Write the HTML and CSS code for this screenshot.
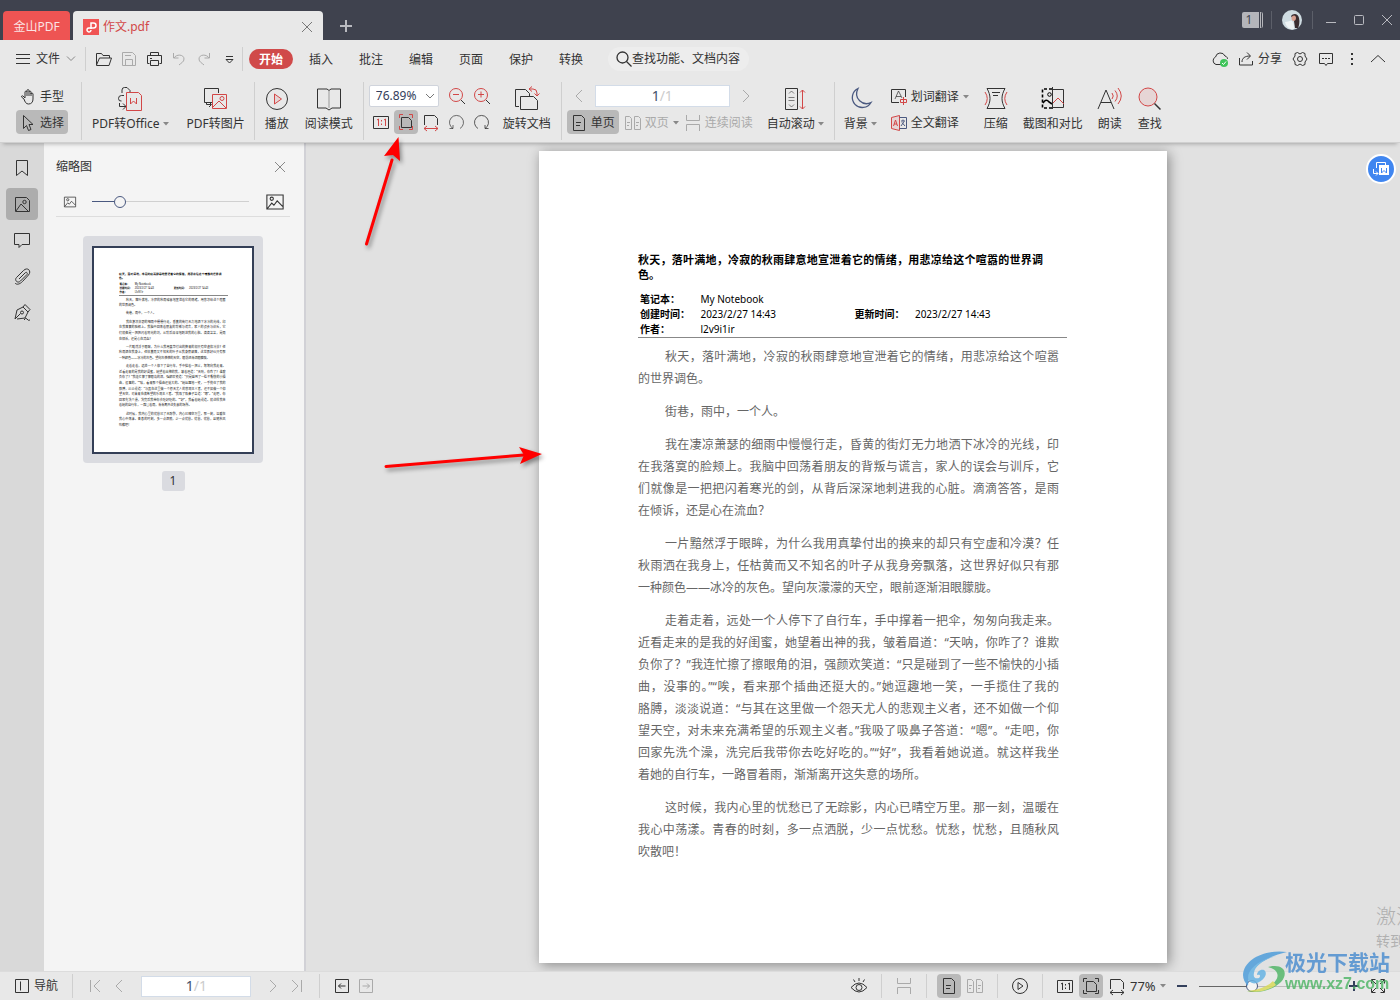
FILE: index.html
```html
<!DOCTYPE html>
<html lang="zh-CN">
<head>
<meta charset="utf-8">
<title>作文.pdf - 金山PDF</title>
<link rel="stylesheet" href="styles.css">
</head>
<body>
<svg class="defs" aria-hidden="true">
  <symbol id="caret" viewBox="0 0 6 4"><path d="M0 0h6L3 3.500z" fill="#888" stroke="none"/></symbol>
  <symbol id="left" viewBox="0 0 24 24"><path d="M15 6l-6 6 6 6"/></symbol>
  <symbol id="right" viewBox="0 0 24 24"><path d="M9 6l6 6-6 6"/></symbol>
  <symbol id="first" viewBox="0 0 24 24"><path d="M7.500 6v12M17 6l-6 6 6 6"/></symbol>
  <symbol id="last" viewBox="0 0 24 24"><path d="M16.500 6v12M7 6l6 6-6 6"/></symbol>
  <symbol id="down" viewBox="0 0 10 8"><path d="M1 1.500l4 4 4-4"/></symbol>
  <symbol id="single" viewBox="0 0 16 16"><path d="M2.500.5h8l3 3v12h-11zM5 7.500h5M5 10.500h4"/></symbol>
  <symbol id="double" viewBox="0 0 16 16"><path d="M.5 1.500h4l2 2v11h-6zM9.500 1.500h4l2 2v11h-6zM2 7.500h3M2 10.500h2M11 7.500h3M11 10.500h2"/></symbol>
  <symbol id="continuous" viewBox="0 0 16 16"><path d="M1.500 0v5.500h13V0M1.500 16v-6.500h13V16"/></symbol>
  <symbol id="picture" viewBox="0 0 24 24"><path d="M4.500 5.500h15v13h-15zM5 18l4-5 2 2 3-4 5 5"/><circle cx="9" cy="9" r="1.500"/></symbol>
</svg>

<header class="titlebar">
  <button class="home-tab">金山PDF</button>
  <div class="doc-tab">
    <svg width="16" height="16" viewBox="0 0 16 16"><path d="M0 0h16v16H0z" fill="#f05454"/><path d="M8 10V4h2.500a2.500 2.500 0 0 1 0 5H6.500a2 2 0 1 0 1.500 2" stroke="#fff" stroke-width="1.500"/></svg>
    <span>作文.pdf</span>
    <button class="tab-close" aria-label="关闭标签"><svg width="12" height="12" viewBox="0 0 12 12"><path d="M1 1l10 10M11 1L1 11"/></svg></button>
  </div>
  <button class="new-tab" aria-label="新建标签"><svg width="14" height="14" viewBox="0 0 14 14"><path d="M7 1v12M1 7h12" stroke-width="2"/></svg></button>
  <div class="window-controls">
    <button class="win-count">1</button>
    <i class="title-sep"></i>
    <svg class="avatar" width="20" height="20" viewBox="0 0 20 20"><circle cx="10" cy="10" r="10" fill="#cfdce2" stroke="none"/><path d="M9 6c2-3 7-3 8 2 1 4 0 8-1 10l-3 0-1-7z" fill="#3a2d30" stroke="none"/><path d="M10 6.500c2-2 4-1 4 1.500 0 2-1.500 3.500-3 3S9 8 10 6.500z" fill="#d8a090" stroke="none"/><path d="M3 12c3 0 5-2 7-1 2 2 2 5 2 8-4 1-8-2-9-7z" fill="#eef3f5" stroke="none"/></svg>
    <i class="title-sep"></i>
    <button aria-label="最小化"><svg width="12" height="12" viewBox="0 0 12 12"><path d="M1 8.500h10"/></svg></button>
    <button aria-label="最大化"><svg width="12" height="12" viewBox="0 0 12 12"><rect x="1.500" y="1.500" width="9" height="9" rx="1"/></svg></button>
    <button aria-label="关闭"><svg width="12" height="12" viewBox="0 0 12 12"><path d="M1 1l10 10M11 1L1 11"/></svg></button>
  </div>
</header>

<nav class="menubar">
  <button class="file-menu"><svg width="14" height="12" viewBox="0 0 14 12"><path d="M0 1.500h14M0 5.500h14M0 10.500h14"/></svg><span>文件</span><svg class="muted" width="10" height="8"><use href="#down"/></svg></button>
  <i class="sep short"></i>
  <div class="quick">
    <button class="icon" aria-label="打开"><svg viewBox="0 0 24 24"><path d="M4.500 18V6.500h5l1.500 2h6.500V11M4.500 18l3-7h12l-2.500 7.500H4.500z"/></svg></button>
    <button class="icon off" aria-label="保存"><svg viewBox="0 0 24 24"><path d="M5.500 5.500h10l3 3v10h-13zM8.500 18v-5.500h7V18M8 8.500h6"/></svg></button>
    <button class="icon" aria-label="打印"><svg viewBox="0 0 24 24"><path d="M8.500 9V5.500h8V9M7.500 16.500h-2v-8h14v8h-2M8.500 13.500h8v5h-8zM8 11.500h2" stroke-linejoin="round"/></svg></button>
    <button class="icon off" aria-label="撤销"><svg viewBox="0 0 24 24"><path d="M6.500 6v5h5M7 11c2-4 10-4 10 1 0 3-3 4-5 6"/></svg></button>
    <button class="icon off" aria-label="恢复"><svg viewBox="0 0 24 24"><path d="M17.500 6v5h-5M17 11c-2-4-10-4-10 1 0 3 3 4 5 6"/></svg></button>
    <button class="icon" aria-label="自定义"><svg viewBox="0 0 24 24"><path d="M9 9.500h7M9 12.500h7l-3.500 3.500z"/></svg></button>
  </div>
  <i class="sep short"></i>
  <div class="tabs">
    <button class="active">开始</button><button>插入</button><button>批注</button><button>编辑</button><button>页面</button><button>保护</button><button>转换</button>
  </div>
  <label class="search"><svg width="16" height="16" viewBox="0 0 16 16"><circle cx="6.500" cy="6.500" r="5.500" stroke-width="1.300"/><path d="M10.500 10.500l5 5" stroke-width="1.300"/></svg><input aria-label="搜索" placeholder="查找功能、文档内容"></label>
  <div class="menu-right">
    <button class="icon" aria-label="云同步"><svg viewBox="0 0 24 24"><path d="M13 17.500H8a4 4 0 0 1-.5-7.500 5 5 0 0 1 9.500-1c2 .5 2.500 2 2.500 3" /><circle cx="16" cy="16" r="4" fill="#3fc45a" stroke="none"/><path d="M14 16l1.500 1.500 2.500-3" stroke="#fff"/></svg></button>
    <button class="share"><svg width="16" height="16" viewBox="0 0 16 16"><path d="M1.500 7v7h13v-4M4 11c0-4 3-6 8-6M9 1.500L12.500 5 9 8.500"/></svg>分享</button>
    <button class="icon" aria-label="设置"><svg viewBox="0 0 24 24"><path d="M9.500 5.500L12 7l2.500-1.500 2.500 1V9l2 3-2 3v2.500l-2.500 1L12 17l-2.500 1.500-2.500-1V15l-2-3 2-3V6.500z" stroke-linejoin="round"/><circle cx="12" cy="12" r="2.500"/></svg></button>
    <button class="icon" aria-label="反馈"><svg viewBox="0 0 24 24"><path d="M5.500 6.500h13v10h-5l-1.500 2-1.500-2h-5zM8 11.500h2M11 11.500h2M14 11.500h2"/></svg></button>
    <button class="icon" aria-label="更多"><svg viewBox="0 0 24 24"><path d="M12 6v2M12 11v2M12 16v2" stroke-width="2"/></svg></button>
    <button class="icon" aria-label="收起功能区"><svg viewBox="0 0 24 24"><path d="M5 15l7-6.500 7 6.500"/></svg></button>
  </div>
</nav>

<section class="ribbon" aria-label="工具">
  <div class="group modes">
    <button class="row-tool"><svg width="16" height="16" viewBox="0 0 16 16"><path d="M4 10L1.500 8c-.5-1 1-1.500 1.500-1l2 2V3c0-1.200 2-1.200 2 0V1.500c0-1.200 2-1.200 2 0V3c0-1.200 2-1.200 2 0v2c0-1.200 2-1.200 2 0v5c0 3-1.500 5-4.500 5-2.500 0-3.500-2-4.500-5zM7 3v4M9 3v4M11 4v3"/></svg>手型</button>
    <button class="row-tool on"><svg width="16" height="16" viewBox="0 0 16 16"><path d="M3.500.5v13l3-3 2 5 2.500-1-2-5h4z"/></svg>选择</button>
  </div>
  <i class="sep"></i>
  <div class="group convert">
    <button class="tool"><svg viewBox="0 0 26 26"><path d="M5 7V4q0-2.500 2.500-2.500H10l3 3V7M7 9.500H4.500q-3 0-3 3T4.500 15M2.500 17v3.500H9M6 17.500l3 3-3 3" /><path class="red" d="M9.500 6.500h12l3 3v15h-15zM13.500 12v6l3-3 3 3v-6"/></svg><span>PDF转Office<svg class="caret"><use href="#caret"/></svg></span></button>
    <button class="tool"><svg viewBox="0 0 26 26"><path d="M9 16.500H1.500v-14h14V7M3.500 16v2.500H8M6 16l2.500 2.500L6 21"/><path class="red" d="M9.500 8.500h14v14h-14zM10 21l6-6 7 7"/><circle class="red" cx="19" cy="12.500" r="2"/></svg><span>PDF转图片</span></button>
  </div>
  <i class="sep"></i>
  <div class="group reading">
    <button class="tool"><svg viewBox="0 0 26 26"><circle cx="13" cy="13" r="10.500"/><path class="red pink" d="M10.500 8l7 5-7 5z"/></svg><span>播放</span></button>
    <button class="tool"><svg viewBox="0 0 26 26"><path d="M13 4.500l-2-1.500H1.500v19H10l3 2 3-2h8.500V3H15z"/><path d="M13 4.500V22" stroke="#999"/></svg><span>阅读模式</span></button>
  </div>
  <i class="sep"></i>
  <div class="group zoom-group">
    <div class="stack">
      <div class="zoom-row"><select aria-label="缩放比例"><option>76.89%</option></select>
        <button class="icon" aria-label="缩小"><svg viewBox="0 0 24 24"><circle class="red" cx="11" cy="11" r="6.500"/><path class="red" d="M8 10.500h6"/><path d="M16 16l4 4"/></svg></button>
        <button class="icon" aria-label="放大"><svg viewBox="0 0 24 24"><circle class="red" cx="11" cy="11" r="6.500"/><path class="red" d="M8 10.500h6M11 7.500v6"/><path d="M16 16l4 4"/></svg></button></div>
      <div class="fit-row">
        <button class="icon" aria-label="实际大小"><svg viewBox="0 0 24 24"><path d="M4.500 6.500h15v12h-15z"/><path class="red" d="M8 10l1.500-1v7M15 10l1.500-1v7M12.500 10v1.500M12.500 13.500v1.500"/></svg></button>
        <button class="icon on" aria-label="适合页面"><svg viewBox="0 0 24 24"><path d="M7.500 7.500h7l3 3v7h-10z"/><path class="red" d="M5.500 8V4.500H9M15 4.500h3.500V8M18.500 16v3.500H15M9 19.500H5.500V16"/></svg></button>
        <button class="icon" aria-label="适合宽度"><svg viewBox="0 0 24 24"><path d="M5.500 15V5.500h10l3 3V15"/><path class="red" d="M5 18.500h14M8 16l-3 2.500L8 21M16 16l3 2.500-3 2.500"/></svg></button>
        <button class="icon" aria-label="向左旋转"><svg viewBox="0 0 24 24"><path d="M9 18.500a7 7 0 1 1 7 0M5.500 18.500H9V15" opacity=".7"/></svg></button>
        <button class="icon" aria-label="向右旋转"><svg viewBox="0 0 24 24"><path d="M9 18.500a7 7 0 1 1 7 0M19.500 18.500H16V15" opacity=".8"/></svg></button></div>
    </div>
    <button class="tool"><svg viewBox="0 0 26 26"><path d="M5 20.500H1.500v-17h10l4 4V10"/><path d="M6.500 10.500h13l4 4v9h-17z" stroke-linejoin="round"/><path class="red" d="M15 3h4q4 0 4 4v3M18 .5L15 3l3 2.500M20.500 7.500L23 10l2.500-2.500"/></svg><span>旋转文档</span></button>
  </div>
  <i class="sep"></i>
  <div class="group page-group">
    <div class="stack">
      <div class="page-row"><button class="icon off" aria-label="上一页"><svg><use href="#left"/></svg></button>
        <label class="pager"><input aria-label="页码" value="1"><span>/1</span></label>
        <button class="icon off" aria-label="下一页"><svg><use href="#right"/></svg></button></div>
      <div class="view-row">
        <button class="row-tool on"><svg width="16" height="16"><use href="#single"/></svg>单页</button>
        <button class="row-tool plain off"><svg width="16" height="16"><use href="#double"/></svg>双页<svg class="caret"><use href="#caret"/></svg></button>
        <button class="row-tool plain off"><svg width="16" height="16"><use href="#continuous"/></svg>连续阅读</button></div>
    </div>
    <button class="tool"><svg viewBox="0 0 26 26"><path d="M3.500 2.500h12v21h-12z"/><path d="M7 7.500L9.500 5 12 7.500M6.500 11.500h6M6.500 14.500h6M7 18.500L9.500 21l2.500-2.500" opacity=".6"/><path class="red" d="M20.500 4v19M18 6.500L20.500 4 23 6.500M18 20.500l2.500 2.500 2.500-2.500"/></svg><span>自动滚动<svg class="caret"><use href="#caret"/></svg></span></button>
  </div>
  <i class="sep"></i>
  <div class="group extras">
    <button class="tool"><svg viewBox="0 0 26 26"><path d="M11 2.500a10 10 0 1 0 13 14c-8 4-18-4-13-14z" stroke="#4a5980" stroke-width="1.300"/></svg><span>背景<svg class="caret"><use href="#caret"/></svg></span></button>
    <div class="stack">
      <button class="row-tool plain"><svg width="16" height="16" viewBox="0 0 16 16"><path d="M8 13.500H.5V.5h14V8"/><path d="M4 10l3.500-8L11 9M5 7.500h5" opacity=".7"/><path class="red" d="M9.500 10.500h6v3h-6zM12.500 8v8"/></svg>划词翻译<svg class="caret"><use href="#caret"/></svg></button>
      <button class="row-tool plain"><svg width="16" height="16" viewBox="0 0 16 16"><path class="red pink" d="M.5 2.500l8-2v15l-8-2zM2.500 11l2-6 2 6M3 9h3"/><path d="M8.500 2.500h7v11h-7M10 6h4M12 4.500V6M10 11l3-4.500M11 7.500l3 3.500" stroke="#4a5980"/></svg>全文翻译</button>
    </div>
    <button class="tool"><svg viewBox="0 0 26 26"><path d="M4 2.500h18c-4 7-4 13 0 20H4c4-7 4-13 0-20zM9 6.500h8M10 9.500h5"/><path class="red" d="M2 6q4.500 6.500 0 13M24 6q-4.500 6.500 0 13"/></svg><span>压缩</span></button>
    <button class="tool"><svg viewBox="0 0 26 26"><path d="M12 3H2.500v19H12" stroke="#000" stroke-width="1.600" stroke-dasharray="3 2"/><path d="M3 17q3-5 6-1l3 2" stroke="#000" stroke-width="1.600"/><circle cx="9.500" cy="8.500" r="1.800" stroke="#000"/><path d="M12.500 1v22M12.500 3.500h11v18h-11"/><path class="red" d="M13 17l5-5 6 6"/></svg><span>截图和对比</span></button>
    <button class="tool"><svg viewBox="0 0 26 26"><path d="M1 23L9 4l8 19M4 16.500h10"/><path class="red" d="M15 7q2.500 3 0 6M18 4.500q4.500 5.500 0 11M21 2q6.500 8 0 16"/></svg><span>朗读</span></button>
    <button class="tool"><svg viewBox="0 0 26 26"><circle class="red pink" cx="11" cy="11" r="9"/><path d="M17.500 17.500l6 6" stroke-width="1.500"/></svg><span>查找</span></button>
  </div>
</section>

<main class="workspace">
  <aside class="rail">
    <button aria-label="书签"><svg viewBox="0 0 24 24"><path d="M6.500 4.500h11v15L12 15l-5.500 4.500z"/></svg></button>
    <button class="on" aria-label="缩略图"><svg viewBox="0 0 24 24"><path d="M5.500 5.500h11l3 3v11h-14zM6 19l5-7 7 7"/><circle cx="14.500" cy="10" r="1.700"/></svg></button>
    <button aria-label="批注"><svg viewBox="0 0 24 24"><path d="M4.500 5.500h15v11H12l-3 3v-3H4.500z"/></svg></button>
    <button aria-label="附件"><svg viewBox="0 0 24 24"><path d="M9 15l6-6c1.500-1.500 3 0 2 1.500l-6.500 6.500c-3 3-6.500-1-4-3.500l7-7c4-4 8.500.5 5 4.500l-6 6.500c-3 3-6 3.500-7.500 1.500"/></svg></button>
    <button aria-label="签名"><svg viewBox="0 0 24 24"><path d="M5 19l2-9 6-3 5 5-3 6-8 1M5 19l5.500-5.500M13 7l2-2.500 5 5-2 2.500M14 20q2-3 3-1t3 1"/><circle cx="12" cy="12.500" r="1.500"/></svg></button>
  </aside>
  <section class="thumbs">
    <div class="thumbs-head"><h2>缩略图</h2><button aria-label="关闭缩略图"><svg width="12" height="12" viewBox="0 0 12 12"><path d="M1 1l10 10M11 1L1 11"/></svg></button></div>
    <div class="thumb-size"><svg width="18" height="18"><use href="#picture"/></svg><input type="range" aria-label="缩略图大小" min="0" max="100" value="15"><svg width="26" height="26"><use href="#picture"/></svg></div>
    <button class="thumb" aria-label="第 1 页"><span class="thumb-frame" id="thumb"></span></button>
    <span class="thumb-no">1</span>
  </section>
  <section class="canvas">
    <article class="page" id="page">
      <h1><span class="ln">秋天，落叶满地，冷寂的秋雨肆意地宣泄着它的情绪，用悲凉给这个喧嚣的世界调</span>色。</h1>
      <table>
        <tr><th>笔记本：</th><td>My Notebook</td><th></th><td></td></tr>
        <tr><th>创建时间：</th><td>2023/2/27 14:43</td><th>更新时间：</th><td>2023/2/27 14:43</td></tr>
        <tr><th>作者：</th><td>l2v9i1ir</td><th></th><td></td></tr>
      </table>
      <p><span class="ln in">秋天，落叶满地，冷寂的秋雨肆意地宣泄着它的情绪，用悲凉给这个喧嚣</span>的世界调色。</p>
      <p><span class="in">街巷，雨中，一个人。</span></p>
      <p><span class="ln in">我在凄凉萧瑟的细雨中慢慢行走，昏黄的街灯无力地洒下冰冷的光线，印</span><span class="ln">在我落寞的脸颊上。我脑中回荡着朋友的背叛与谎言，家人的误会与训斥，它</span><span class="ln">们就像是一把把闪着寒光的剑，从背后深深地刺进我的心脏。滴滴答答，是雨</span>在倾诉，还是心在流血？</p>
      <p><span class="ln in">一片黯然浮于眼眸，为什么我用真挚付出的换来的却只有空虚和冷漠？任</span><span class="ln">秋雨洒在我身上，任枯黄而又不知名的叶子从我身旁飘落，这世界好似只有那</span>一种颜色——冰冷的灰色。望向灰濛濛的天空，眼前逐渐泪眼朦胧。</p>
      <p><span class="ln in">走着走着，远处一个人停下了自行车，手中撑着一把伞，匆匆向我走来。</span><span class="ln">近看走来的是我的好闺蜜，她望着出神的我，皱着眉道：“天呐，你咋了？谁欺</span><span class="ln">负你了？”我连忙擦了擦眼角的泪，强颜欢笑道：“只是碰到了一些不愉快的小插</span><span class="ln">曲，没事的。”“唉，看来那个插曲还挺大的。”她逗趣地一笑，一手揽住了我的</span><span class="ln">胳膊，淡淡说道：“与其在这里做一个怨天尤人的悲观主义者，还不如做一个仰</span><span class="ln">望天空，对未来充满希望的乐观主义者。”我吸了吸鼻子答道：“嗯”。“走吧，你</span><span class="ln">回家先洗个澡，洗完后我带你去吃好吃的。”“好”，我看着她说道。就这样我坐</span>着她的自行车，一路冒着雨，渐渐离开这失意的场所。</p>
      <p><span class="ln in">这时候，我内心里的忧愁已了无踪影，内心已晴空万里。那一刻，温暖在</span><span class="ln">我心中荡漾。青春的时刻，多一点洒脱，少一点忧愁。忧愁，忧愁，且随秋风</span>吹散吧！</p>
    </article>
    <button class="float-btn" aria-label="转为Word"><svg width="18" height="18" viewBox="0 0 18 18"><path d="M4.500 8V2.500h9V5M1.500 9v4.500H6M4 11.500l2 2-2 2" stroke="#fff"/><path d="M7 5h10v10H7z" fill="#fff" stroke="none"/><path d="M9.500 8v5l2.500-2.500 2.500 2.500V8" stroke="#4086f0"/></svg></button>
    <div class="activate"><b>激活</b><span>转到</span></div>
  </section>
</main>

<footer class="status">
  <button class="nav-btn"><svg width="16" height="16" viewBox="0 0 16 16"><path d="M1.500 1.500h13v13h-13zM6.500 3.500v9"/></svg>导航</button>
  <i class="sep"></i>
  <button class="icon off" aria-label="首页"><svg><use href="#first"/></svg></button>
  <button class="icon off" aria-label="上一页"><svg><use href="#left"/></svg></button>
  <label class="pager small"><input aria-label="当前页" value="1"><span>/1</span></label>
  <button class="icon off" aria-label="下一页"><svg><use href="#right"/></svg></button>
  <button class="icon off" aria-label="末页"><svg><use href="#last"/></svg></button>
  <i class="sep"></i>
  <button class="icon" aria-label="后退"><svg viewBox="0 0 24 24"><path d="M5.500 5.500h13v13h-13zM8.500 12h7M11 9.500L8.500 12l2.500 2.500"/></svg></button>
  <button class="icon off" aria-label="前进"><svg viewBox="0 0 24 24"><path d="M5.500 5.500h13v13h-13zM8.500 12h7M13 9.500l2.500 2.500-2.500 2.500"/></svg></button>
  <div class="status-right">
    <button class="icon" aria-label="护眼模式"><svg viewBox="0 0 24 24"><path d="M4 13.500q8-9 16 0-8 9-16 0zM12 4v3M6.500 5.500L8 8M17.500 5.500L16 8"/><circle cx="12" cy="13.500" r="3"/></svg></button>
    <i class="sep"></i>
    <button class="icon off" aria-label="连续阅读"><svg class="s16"><use href="#continuous"/></svg></button>
    <i class="sep"></i>
    <button class="icon on" aria-label="单页"><svg class="s16"><use href="#single"/></svg></button>
    <button class="icon off tight" aria-label="双页"><svg class="s16"><use href="#double"/></svg></button>
    <i class="sep"></i>
    <button class="icon" aria-label="播放"><svg viewBox="0 0 24 24"><circle cx="12" cy="12" r="7.500"/><path d="M10 8.500l5 3.500-5 3.500z"/></svg></button>
    <i class="sep"></i>
    <button class="icon" aria-label="实际大小"><svg viewBox="0 0 24 24"><path d="M4.500 6.500h15v12h-15zM8 10l1.500-1v7M15 10l1.500-1v7M12.500 10v1.500M12.500 13.500v1.500"/></svg></button>
    <button class="icon on tight" aria-label="适合页面"><svg viewBox="0 0 24 24"><path d="M7.500 7.500h7l3 3v7h-10zM4.500 8V4.500H8M16 4.500h3.500V8M19.500 16v3.500H16M8 19.500H4.500V16"/></svg></button>
    <button class="icon tight" aria-label="适合宽度"><svg viewBox="0 0 24 24"><path d="M5.500 15V5.500h10l3 3V15M5 18.500h14M8 16l-3 2.500L8 21M16 16l3 2.500-3 2.500"/></svg></button>
    <button class="percent">77%<svg class="caret"><use href="#caret"/></svg></button>
    <button class="icon" aria-label="缩小"><svg viewBox="0 0 24 24"><path d="M7 12h10" stroke="#34405c" stroke-width="2"/></svg></button>
    <input class="zoom-range" type="range" aria-label="缩放" min="0" max="100" value="37">
    <button class="icon" aria-label="放大"><svg viewBox="0 0 24 24"><path d="M7 12h10M12 7v10" stroke="#34405c" stroke-width="2"/></svg></button>
    <button class="icon" aria-label="全屏"><svg viewBox="0 0 24 24"><path d="M5.500 9.500v-4h4M14.500 5.500h4v4M18.500 14.500v4h-4M9.500 18.500h-4v-4M6 6l4 4M18 6l-4 4M6 18l4-4M18 18l-4-4"/></svg></button>
  </div>
</footer>

<svg class="arrow arrow-up" width="60" height="120" viewBox="0 0 60 120" aria-hidden="true"><path d="M15.500 107L41 23" stroke="#f00" stroke-width="3" stroke-linecap="round"/><path d="M47.500 0l1.500 24-7-6-9 1z" fill="#f00" stroke="none"/></svg>
<svg class="arrow arrow-right" width="170" height="30" viewBox="0 0 170 30" aria-hidden="true"><path d="M6 21.500L144 10" stroke="#f00" stroke-width="3" stroke-linecap="round"/><path d="M162 9l-23-7 5 8-4 9z" fill="#f00" stroke="none"/></svg>
<div class="brand">
  <svg width="46" height="42" viewBox="0 0 46 42" aria-hidden="true"><path d="M45 1C25-2 2 7 1 24c0 4 2 8 5 11 0-16 13-28 39-34z" fill="#4f9edb" stroke="none"/><path d="M34 5C17 9 6 18 6 27c1 5 6 7 11 4 6-3 9-9 5-12-4-1-7 2-7 5 3-1 4 1 2 3-4 1-6-1-5-5 1-7 9-13 22-17z" fill="#67b4e4" stroke="none"/><path d="M26 16c16-4 21 6 13 15-8 8-22 12-34 9 12 0 24-3 29-11 4-6 0-11-8-13z" fill="#55b76b" stroke="none"/><path d="M34 34c-8 6-20 8-29 6 10-1 20-4 26-10z" fill="#d9da5a" stroke="none"/></svg>
  <div><strong>极光下载站</strong><span>www.xz7.com</span></div>
</div>
<script src="thumb.js"></script>
</body>
</html>
```
FILE: thumb.js
```js
// Fill the thumbnail with a small copy of the open page.
const copy = document.getElementById('page').cloneNode(true);
copy.removeAttribute('id');
copy.classList.add('mini');
copy.setAttribute('aria-hidden', 'true');
document.getElementById('thumb').append(copy);
```
FILE: styles.css
```css
* { box-sizing: border-box; }
body {
  margin: 0;
  height: 100vh;
  display: flex;
  flex-direction: column;
  position: relative;
  overflow: hidden;
  background: #e8e8e8;
  color: #333;
  font: 12px/16px "Noto Sans", "Noto Sans CJK SC", sans-serif;
}
button, input, select { font: inherit; color: inherit; }
button { border: 0; padding: 0; background: none; white-space: nowrap; }
svg { fill: none; stroke: currentColor; flex: none; display: block; }
.defs { position: absolute; width: 0; height: 0; }
.red { stroke: #d24747; }
.pink { fill: #e6d5d5; }
.caret { width: 6px; height: 4px; }
.muted { color: #888; }

.icon { width: 24px; height: 24px; border-radius: 4px; display: grid; place-items: center; flex: none; }
.icon svg { width: 24px; height: 24px; }
.icon .s16 { width: 16px; height: 16px; }
.on { background: #b9b9b9; }
.off { color: #aaa; }
.sep { width: 1px; background: #cfcfcf; flex: none; }

/* title bar */
.titlebar { height: 40px; flex: none; display: flex; align-items: flex-end; padding-left: 3px; background: #3f424e; color: #b9bac0; }
.home-tab { width: 67px; height: 29px; padding-top: 2px; border-radius: 4px 4px 0 0; background: #ee5453; color: #fbe3e3; }
.doc-tab { width: 250px; height: 29px; margin-left: 3px; padding: 2px 10px 0; display: flex; align-items: center; gap: 4px; border-radius: 4px 4px 0 0; background: #e8e8e8; color: #d24747; }
.doc-tab > svg { stroke: none; }
.tab-close { margin-left: auto; color: #777; }
.new-tab { margin: 0 0 7px 16px; }
.window-controls { height: 40px; margin-left: auto; padding-right: 7px; display: flex; align-items: center; gap: 16px; }
.win-count { width: 21px; height: 16px; margin-right: -8px; padding-right: 4px; border-right: 3px double #b4b5ba; background: linear-gradient(#b4b5ba, #b4b5ba) 0 0 / 17px 16px no-repeat; border-radius: 2px; color: #3f424e; }
.title-sep { width: 1px; height: 18px; background: #5c5f69; margin-right: -6px; }
.avatar { margin-right: -6px; }
.title-sep + button { margin-left: 2px; }

/* menu row */
.menubar { height: 38px; flex: none; display: flex; align-items: center; padding: 0 10px 0 16px; }
.file-menu { display: flex; align-items: center; gap: 6px; }
.short { height: 24px; margin: 0 6px 0 9px; }
.quick { display: flex; gap: 1px; }
.quick + .short { margin: 0 6px 0 1px; }
.tabs { display: flex; align-items: center; gap: 26px; }
.tabs button { padding-top: 1px; }
.tabs .active { width: 44px; height: 20px; margin-right: -10px; border-radius: 10px; background: #d04a4a; color: #fff; font-weight: 700; }
.search { width: 141px; height: 24px; margin-left: 25px; padding-left: 8px; display: flex; align-items: center; border-radius: 12px; background: #ededed; }
.search input { width: 116px; padding: 0; border: 0; background: none; outline: 0; }
.search input::placeholder { color: #333; opacity: 1; }
.menu-right { margin-left: auto; display: flex; align-items: center; gap: 2px; }
.share { display: flex; align-items: center; gap: 4px; margin: 0 4px; }

/* ribbon */
.ribbon { height: 65px; flex: none; display: flex; border-bottom: 1px solid #d0d0d0; box-shadow: 0 4px 4px -3px #0004; z-index: 1; }
.ribbon > .sep { height: 58px; margin-top: 4px; }
.group { display: flex; padding: 6px 10px 0; flex: none; }
.modes { padding: 6px 13px 0 16px; flex-direction: column; gap: 2px; }
.convert { padding-right: 9px; gap: 18px; }
.reading { padding-left: 9px; gap: 15px; }
.zoom-group { padding-left: 5px; gap: 9px; }
.page-group { padding-left: 5px; gap: 9px; }
.extras { padding-left: 9px; gap: 14px; }
.tool { display: flex; flex-direction: column; align-items: center; gap: 4px; padding-top: 2px; height: 56px; }
.tool > svg { width: 26px; height: 26px; }
.tool > span { display: flex; align-items: center; gap: 3px; }
.stack { display: flex; flex-direction: column; gap: 2px; }
.row-tool { height: 24px; padding: 1px 4px 0; display: flex; align-items: center; gap: 4px; border-radius: 4px; }
.plain { padding: 1px 0 0; }
.zoom-row, .fit-row { display: flex; align-items: center; gap: 1px; }
.zoom-row select { width: 70px; height: 22px; margin-right: 5px; padding: 0 6px; appearance: none; border: 1px solid #d0d4dc; border-radius: 2px; color: #34405c; background: #fff url("data:image/svg+xml,%3Csvg xmlns='http://www.w3.org/2000/svg' width='10' height='8' fill='none' stroke='%23777'%3E%3Cpath d='M1 2l4 4 4-4'/%3E%3C/svg%3E") right 3px center no-repeat; }
.page-row { display: flex; align-items: center; gap: 4px; }
.view-row { display: flex; align-items: center; gap: 6px; }
.pager { width: 135px; height: 22px; display: flex; align-items: center; border: 1px solid #d3dce8; background: #fff; font-size: 14px; color: #ccc; flex: none; }
.pager input { width: 48%; padding: 0; border: 0; background: none; text-align: right; color: #44506a; outline: 0; }
.small { width: 110px; margin: 0 10px; }

/* workspace */
.workspace { flex: 1; min-height: 0; display: flex; }
.rail { width: 44px; flex: none; display: flex; flex-direction: column; align-items: center; gap: 4px; padding-top: 9px; background: #d9d9d9; }
.rail button { width: 32px; height: 32px; display: grid; place-items: center; border-radius: 4px; }
.rail svg { width: 24px; height: 24px; }
.rail .on { background: #adadad; }
.thumbs { width: 262px; flex: none; display: flex; flex-direction: column; align-items: center; padding: 0 14px 0 12px; border-right: 2px solid #d1d1d6; background: #f4f4f4; }
.thumbs-head { width: 100%; height: 46px; padding: 2px 4px 0 0; display: flex; align-items: center; justify-content: space-between; }
.thumbs-head h2 { margin: 0; font-size: 12px; line-height: 16px; font-weight: 400; }
.thumbs-head button { color: #888; }
.thumb-size { width: 100%; height: 28px; padding: 0 2px 2px 5px; display: flex; align-items: center; gap: 13px; border-bottom: 1px solid #ddd; }
.thumb-size input { flex: 1; min-width: 0; }
.thumb { width: 180px; height: 227px; margin-top: 19px; display: grid; place-items: center; border-radius: 4px; background: #dadbe0; }
.thumb-frame { display: block; border: 2px solid #343f57; width: 162px; height: 208px; overflow: hidden; background: #fff; text-align: left; }
.mini.page { zoom: 0.253; box-shadow: none; white-space: normal; color: #222; }
.thumb-no { margin-top: 8px; width: 23px; height: 20px; line-height: 20px; text-align: center; border-radius: 3px; background: #dadbe0; }

input[type="range"] { appearance: none; height: 14px; margin: 0; background: linear-gradient(90deg, #4a5980 14%, #d0d0d0 14%) center / 100% 1px no-repeat; }
input[type="range"]::-webkit-slider-thumb { appearance: none; width: 12px; height: 12px; border: 1px solid #4a5980; border-radius: 50%; background: #f4f4f4; }

.canvas { flex: 1; min-width: 0; position: relative; overflow: hidden; display: flex; justify-content: center; align-items: flex-start; padding-top: 8px; background: #e1e1e1; }
.page { width: 628px; min-height: 812px; padding: 101px 99px 0; background: #fff; box-shadow: 2px 2px 12px #0006; color: #666; line-height: 22px; flex: none; }
.page h1 { width: 405px; margin: 0; font-size: 11px; line-height: 15px; color: #000; }
.ln { display: block; text-align: justify; text-align-last: justify; white-space: nowrap; }
.in { padding-left: 27px; }
.page table { width: 429px; margin: 10px 0 0; border-collapse: collapse; border-bottom: 1px solid #888; table-layout: fixed; font-size: 10px; line-height: 15px; color: #000; text-align: left; }
.page th { width: 60px; padding: 0 0 0 2px; height: 15px; }
.page td { width: 153px; padding: 0 0 0 2px; }
.page p { width: 421px; margin: 0 0 11px; }
.page table + p { margin-top: 8px; }
.float-btn { position: absolute; top: 11px; right: 4px; width: 30px; height: 30px; display: grid; place-items: center; border: 2px solid #fff; border-radius: 50%; background: #4086f0; }
.activate { position: absolute; left: calc(100% - 24px); bottom: 20px; display: flex; flex-direction: column; white-space: nowrap; color: #b0b0b0; font-size: 14px; line-height: 20px; }
.activate b { font-size: 20px; line-height: 28px; font-weight: 300; }

/* status bar */
.status { height: 29px; flex: none; display: flex; align-items: center; padding: 0 10px 0 14px; border-top: 1px solid #dcdcdc; }
.status .sep { height: 24px; margin: 0 10px; }
.status .pager { height: 21px; }
.nav-btn { display: flex; align-items: center; gap: 4px; margin-right: 4px; }
.status-right { margin-left: auto; display: flex; align-items: center; }
.tight { margin-left: 2px; }
.percent { width: 41px; display: flex; align-items: center; gap: 4px; padding-left: 1px; font-size: 13px; }
.status .zoom-range { width: 138px; margin: 0 5px; background-image: linear-gradient(90deg, #666 37%, #bbb 37%); }
.zoom-range::-webkit-slider-thumb { border-color: #555; }

/* annotation arrows and site mark, laid over the window */
.arrow { position: absolute; pointer-events: none; filter: drop-shadow(2px 3px 2px #0006); z-index: 2; }
.arrow-up { left: 351px; top: 137px; }
.arrow-right { left: 380px; top: 445px; }
.brand { position: absolute; right: 10px; bottom: 7px; display: flex; align-items: flex-end; opacity: .85; pointer-events: none; z-index: 2; }
.brand div { display: flex; flex-direction: column; margin-left: -3px; }
.brand strong { font-size: 21px; line-height: 26px; color: #4f8fd0; }
.brand span { font: 700 16px/18px "Liberation Sans", sans-serif; color: #55b76b; }
```
